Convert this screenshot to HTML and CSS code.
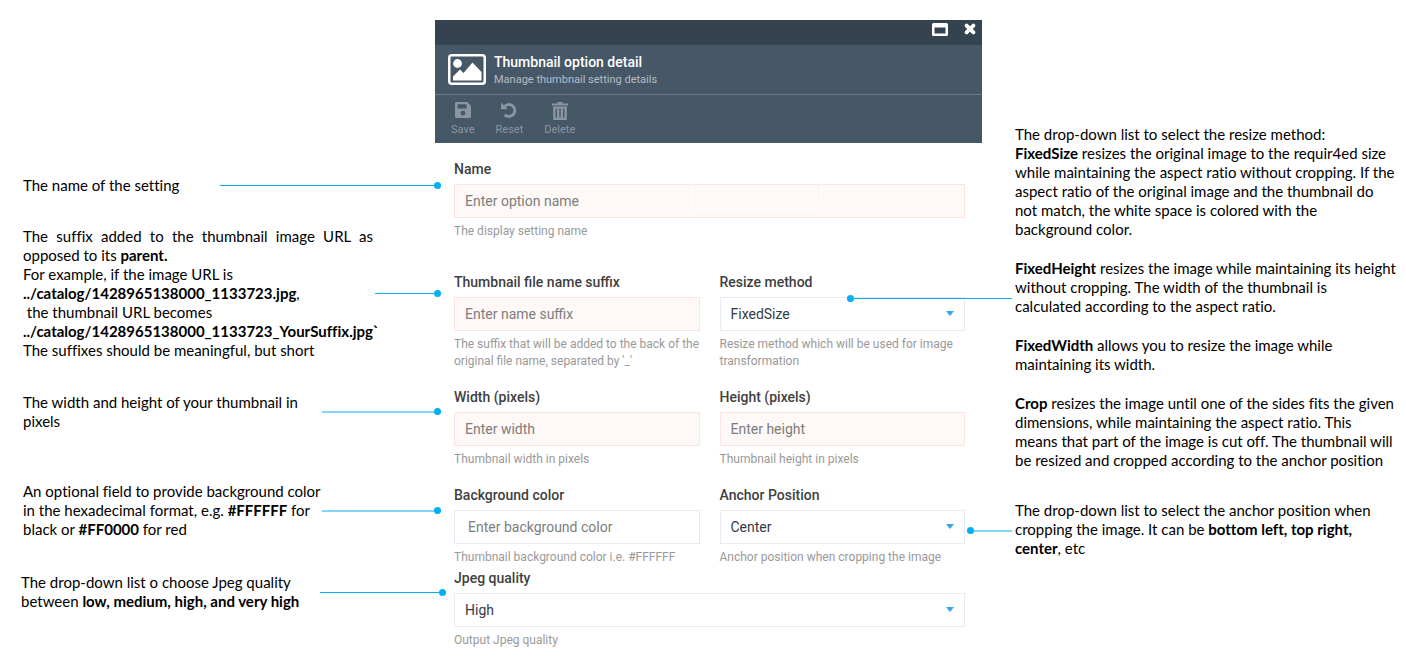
FILE: index.html
```html
<!DOCTYPE html>
<html lang="en">
<head>
<meta charset="utf-8">
<title>Thumbnail option detail</title>
<link rel="stylesheet" href="styles.css">
</head>
<body>
<main class="guide">
  <aside class="notes notes-left">
    <div class="note note-name">
      <p class="note-text">The name of the setting</p>
      <span class="connector"></span>
    </div>
    <div class="note note-suffix">
      <div class="note-text">
        <p class="justified">The suffix added to the thumbnail image URL as opposed to its <b>parent.</b></p>
        <p>For example, if the image URL is<br><b>../catalog/1428965138000_1133723.jpg</b>,<br>&nbsp;the thumbnail URL becomes<br><b>../catalog/1428965138000_1133723_YourSuffix.jpg`</b></p>
        <p>The suffixes should be meaningful, but short</p>
      </div>
      <span class="connector"></span>
    </div>
    <div class="note note-size">
      <p class="note-text">The width and height of your thumbnail in<br>pixels</p>
      <span class="connector soft"></span>
    </div>
    <div class="note note-color">
      <p class="note-text">An optional field to provide background color<br>in the hexadecimal format, e.g. <b>#FFFFFF</b> for<br>black or <b>#FF0000</b> for red</p>
      <span class="connector soft"></span>
    </div>
    <div class="note note-quality">
      <p class="note-text">The drop-down list o choose Jpeg quality<br>between <b>low, medium, high, and very high</b></p>
      <span class="connector"></span>
    </div>
  </aside>

  <section class="blade">
    <header class="blade-head">
      <div class="titlebar">
        <button class="window-btn" type="button" aria-label="Maximize">
          <svg width="16" height="13" viewBox="0 0 16 13"><path fill="#fff" fill-rule="evenodd" d="M1.500 0h13A1.500 1.500 0 0 1 16 1.500v10a1.500 1.500 0 0 1-1.500 1.500h-13A1.500 1.500 0 0 1 0 11.500v-10A1.500 1.500 0 0 1 1.500 0zM2.500 4.500v6h11v-6z"/></svg>
        </button>
        <button class="window-btn" type="button" aria-label="Close">
          <svg width="12" height="12" viewBox="0 0 12 12"><path d="M2.600 2.600l6.800 6.800M9.400 2.600L2.600 9.400" stroke="#fff" stroke-width="3.800" stroke-linecap="round"/></svg>
        </button>
      </div>
      <div class="heading">
        <svg width="38" height="31" viewBox="0 0 38 31"><rect x="1.250" y="1.250" width="35.500" height="28.500" rx="2.500" fill="none" stroke="#fff" stroke-width="2.500"/><circle cx="9.500" cy="9.500" r="4.400" fill="#fff"/><path fill="#fff" d="M5 26.500v-4l7-7 3.500 3.500 9-10.500 9 9.500v8.500z"/></svg>
        <div class="heading-text">
          <h1 class="title">Thumbnail option detail</h1>
          <p class="subtitle">Manage thumbnail setting details</p>
        </div>
      </div>
      <div class="toolbar">
        <button class="tool" type="button">
          <svg width="16" height="16" viewBox="0 0 16 16"><path fill="currentColor" fill-rule="evenodd" d="M1.500 0h10.700L16 3.800v10.700a1.500 1.500 0 0 1-1.500 1.500h-13A1.500 1.500 0 0 1 0 14.500v-13A1.500 1.500 0 0 1 1.500 0zM2.500 2.300v4.200h9V2.300zM8 8.800a2.400 2.400 0 1 0 0 4.800 2.400 2.400 0 0 0 0-4.800z"/></svg>
          <span>Save</span>
        </button>
        <button class="tool" type="button">
          <svg width="16" height="16" viewBox="0 0 16 16"><path fill="none" stroke="currentColor" stroke-width="2.800" d="M3 5A6 6 0 1 1 3.600 12.700"/><path fill="currentColor" d="M0 0.500l7 6.800H0z"/></svg>
          <span>Reset</span>
        </button>
        <button class="tool" type="button">
          <svg width="16" height="18" viewBox="0 0 16 18"><path fill="currentColor" fill-rule="evenodd" d="M5.500 0h5v1.500H16v2H0v-2h5.500zM1.200 4.500h13.600V18H1.200zM3.600 6.500v9.300h1.400V6.500zM7.300 6.500v9.300h1.400V6.500zM11 6.500v9.300h1.400V6.500z"/></svg>
          <span>Delete</span>
        </button>
      </div>
    </header>

    <form class="form">
      <div class="field wide roomy">
        <label for="name">Name</label>
        <div class="control ghost"><input id="name" class="required" type="text" placeholder="Enter option name"></div>
        <p class="hint">The display setting name</p>
      </div>
      <div class="field">
        <label for="suffix">Thumbnail file name suffix</label>
        <div class="control"><input id="suffix" class="required" type="text" placeholder="Enter name suffix"></div>
        <p class="hint">The suffix that will be added to the back of the<br>original file name, separated by '_'</p>
      </div>
      <div class="field">
        <label for="method">Resize method</label>
        <div class="control drop"><select id="method"><option>FixedSize</option><option>FixedHeight</option><option>FixedWidth</option><option>Crop</option></select></div>
        <p class="hint">Resize method which will be used for image<br>transformation</p>
      </div>
      <div class="field">
        <label for="width">Width (pixels)</label>
        <div class="control"><input id="width" class="required" type="text" placeholder="Enter width"></div>
        <p class="hint">Thumbnail width in pixels</p>
      </div>
      <div class="field">
        <label for="height">Height (pixels)</label>
        <div class="control"><input id="height" class="required" type="text" placeholder="Enter height"></div>
        <p class="hint">Thumbnail height in pixels</p>
      </div>
      <div class="field tight">
        <label for="color">Background color</label>
        <div class="control"><input id="color" class="color" type="text" placeholder="Enter background color"></div>
        <p class="hint">Thumbnail background color i.e. #FFFFFF</p>
      </div>
      <div class="field tight">
        <label for="anchor">Anchor Position</label>
        <div class="control drop"><select id="anchor"><option>Center</option><option>Bottom left</option><option>Top right</option></select></div>
        <p class="hint">Anchor position when cropping the image</p>
      </div>
      <div class="field wide tight">
        <label for="quality">Jpeg quality</label>
        <div class="control drop"><select id="quality"><option>High</option><option>Low</option><option>Medium</option><option>Very high</option></select></div>
        <p class="hint">Output Jpeg quality</p>
      </div>
    </form>
  </section>

  <aside class="notes notes-right">
    <div class="note note-method">
      <span class="connector"></span>
      <div class="note-text">
        <p>The drop-down list to select the resize method:<br><b>FixedSize</b> resizes the original image to the requir4ed size<br>while maintaining the aspect ratio without cropping. If the<br>aspect ratio of the original image and the thumbnail do<br>not match, the white space is colored with the<br>background color.</p>
        <p><b>FixedHeight</b> resizes the image while maintaining its height<br>without cropping. The width of the thumbnail is<br>calculated according to the aspect ratio.</p>
        <p><b>FixedWidth</b> allows you to resize the image while<br>maintaining its width.</p>
        <p><b>Crop</b> resizes the image until one of the sides fits the given<br>dimensions, while maintaining the aspect ratio. This<br>means that part of the image is cut off. The thumbnail will<br>be resized and cropped according to the anchor position</p>
      </div>
    </div>
    <div class="note note-anchor">
      <span class="connector soft"></span>
      <p class="note-text">The drop-down list to select the anchor position when<br>cropping the image. It can be <b>bottom left, top right,<br>center</b>, etc</p>
    </div>
  </aside>
</main>
</body>
</html>
```
FILE: styles.css
```css
* { box-sizing: border-box; }

body {
  margin: 0;
  background: #fff;
  font-family: Roboto, "Liberation Sans", sans-serif;
}

p, h1 { margin: 0; }

.guide {
  display: grid;
  grid-template-columns: 435fr 547fr 424fr;
  align-items: start;
}

/* Side notes */
.notes {
  min-width: 0;
  font: 15px/19px Lato, "Liberation Sans", sans-serif;
  font-variant-ligatures: none;
  color: #000;
  white-space: nowrap;
}

.note {
  position: relative;
  display: flex;
  align-items: center;
}

.notes-left { padding: 176px 0 0 23px; }
.notes-right { padding: 125px 0 0 33px; }

.notes-left .note-text { flex: none; width: 299px; }
.notes-left .note-name .note-text { width: 197px; }
.notes-left .note-suffix .note-text { width: 352px; }

.note-suffix { margin-top: 32px; }
.note-size { margin-top: 33px; }
.note-color { margin-top: 51px; }
.note-quality { margin-top: 34px; margin-left: -2px; }
.note-anchor { margin-top: 31px; }

.justified {
  width: 350px;
  text-align: justify;
  white-space: normal;
}

.note-method p + p { margin-top: 20px; }

.connector {
  position: relative;
  flex: 1;
  height: 1px;
  margin-right: -6px;
  background: #00b0f0;
  z-index: 1;
}

.connector.soft { height: 2px; background: #7fd7f7; }

.connector::after {
  content: "";
  position: absolute;
  right: 0;
  top: -3px;
  width: 7px;
  height: 7px;
  border-radius: 50%;
  background: #00b0f0;
}

.note-quality .connector { margin-right: -11px; }

.notes-right .connector {
  position: absolute;
  top: 50%;
  right: 100%;
  width: 45px;
  margin-right: 3px;
}

.notes-right .note-method .connector { width: 165px; }
.notes-right .connector::after { right: auto; left: 0; }

/* Blade header */
.blade { min-width: 0; padding-top: 20px; }

.blade-head {
  background: #465768;
  color: #fff;
}

.titlebar {
  display: flex;
  justify-content: flex-end;
  gap: 16px;
  height: 25px;
  padding: 3px 6px 0 0;
  background: #35424f;
}

.window-btn {
  display: flex;
  align-items: center;
  height: 12px;
  padding: 0;
  border: 0;
  background: none;
}

.heading {
  display: flex;
  align-items: center;
  gap: 8px;
  height: 50px;
  padding: 0 13px;
  border-bottom: 1px solid #6b7a89;
}

.heading-text { padding-top: 2px; }
.title { font-size: 14px; font-weight: 500; line-height: 18px; }
.subtitle { font-size: 11px; line-height: 18px; color: #b5bcc4; }

.toolbar {
  display: flex;
  gap: 21px;
  height: 48px;
  padding: 7px 16px;
}

.tool {
  display: flex;
  flex-direction: column;
  align-items: center;
  justify-content: space-between;
  padding: 0;
  border: 0;
  background: none;
  font: 11px/13px Roboto, sans-serif;
  color: #8b96a2;
}

/* Form */
.form {
  display: grid;
  grid-template-columns: 1fr 1fr;
  column-gap: 20px;
  padding: 18px 17px 0 19px;
}

.field { margin-bottom: 19px; }
.field.wide { grid-column: 1 / -1; }
.field.roomy { margin-bottom: 34px; }
.field.tight { margin-bottom: 4px; }

.field label {
  display: block;
  margin-bottom: 7px;
  font-size: 14px;
  font-weight: 500;
  line-height: 16px;
  color: #3f3f3f;
}

.control { position: relative; }

.control input,
.control select {
  display: block;
  width: 100%;
  height: 34px;
  padding: 0 10px;
  border: 1px solid #e9ebf4;
  border-radius: 0;
  background: #fff;
  font: 14px Roboto, sans-serif;
  color: #333b45;
  appearance: none;
}

.control .required {
  border-color: #fde3e1;
  background: #fef8f6;
}

.control .color { padding-left: 13px; }
.control input::placeholder { color: #7d7d7d; opacity: 1; }

.ghost::after {
  content: "";
  position: absolute;
  top: 0;
  left: 237px;
  width: 129px;
  height: 25px;
  border: 1px solid #fff;
  border-top: 0;
  border-radius: 0 0 7px 7px;
  pointer-events: none;
}

.drop::after {
  content: "";
  position: absolute;
  top: 14px;
  right: 11px;
  border: solid transparent;
  border-width: 5px 4px 0;
  border-top-color: #35a8e0;
  pointer-events: none;
}

.hint {
  margin-top: 5px;
  font-size: 12px;
  line-height: 17px;
  color: #999;
  white-space: nowrap;
}
```
